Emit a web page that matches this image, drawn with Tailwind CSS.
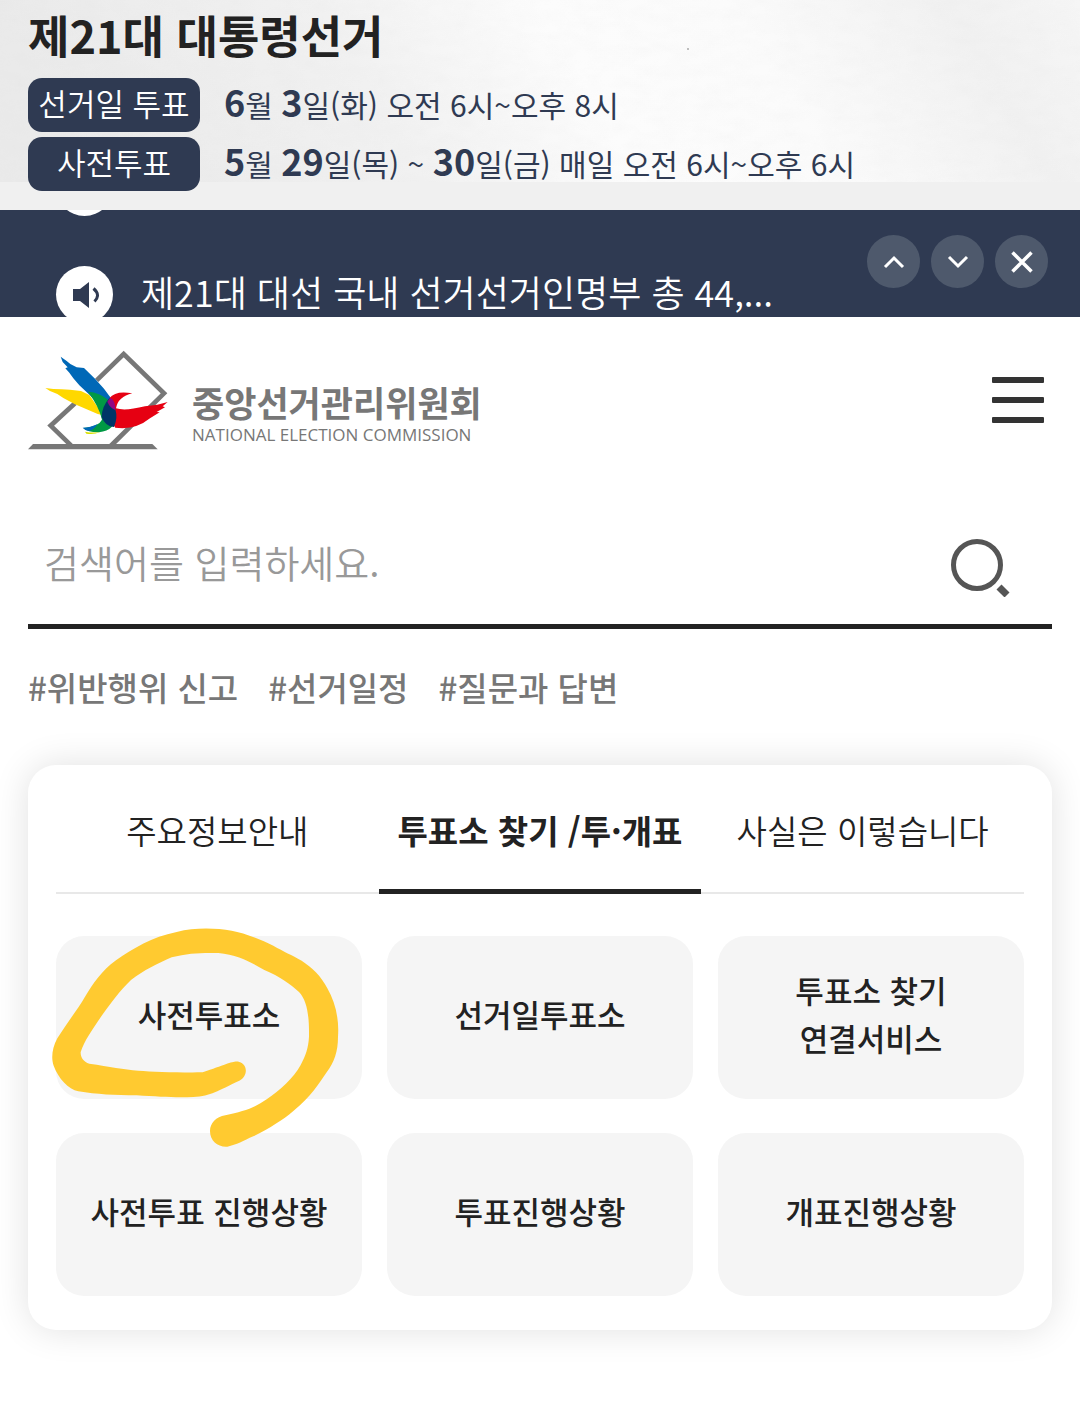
<!DOCTYPE html>
<html lang="ko">
<head>
    <meta charset="UTF-8">
    <meta name="viewport" content="width=device-width, initial-scale=1.0">
    <title>중앙선거관리위원회</title>
    <script src="https://cdn.jsdelivr.net/npm/@tailwindcss/browser@4"></script>
</head>
<body class="bg-white text-[#222] font-['Noto_Sans_CJK_KR',sans-serif]">
    <!-- Election schedule -->
    <section class="relative bg-[#f0f0f0] px-7 pt-1 pb-[19px]">
        <svg class="absolute left-0 top-0 w-full h-[182px]" preserveAspectRatio="none" viewBox="0 0 1080 182" aria-hidden="true">
            <defs>
                <linearGradient id="paper" x1="0" y1="0.1" x2="1" y2="0">
                    <stop offset="0" stop-color="#eaeaea"/>
                    <stop offset="0.3" stop-color="#f1f1f1"/>
                    <stop offset="0.5" stop-color="#fcfcfc"/>
                    <stop offset="0.68" stop-color="#fbfbfb"/>
                    <stop offset="0.88" stop-color="#f1f1f1"/>
                    <stop offset="1" stop-color="#f6f6f6"/>
                </linearGradient>
                <filter id="grain" x="0" y="0" width="100%" height="100%">
                    <feTurbulence type="fractalNoise" baseFrequency="0.04 0.09" numOctaves="4" seed="4"/>
                    <feColorMatrix values="0 0 0 0 0.6  0 0 0 0 0.6  0 0 0 0 0.6  0.5 0 0 0 -0.16"/>
                </filter>
            </defs>
            <rect width="1080" height="182" fill="url(#paper)"/>
            <rect width="1080" height="182" filter="url(#grain)" opacity="0.2"/>
            <circle cx="688" cy="49" r="1" fill="#aaa"/>
        </svg>
        <div class="relative">
            <h1 class="text-[45px] leading-[62px] font-bold mb-3">제21대 대통령선거</h1>
            <dl class="grid grid-cols-[172px_1fr] gap-x-6 gap-y-[5px] text-[#2f3a52]">
                <dt class="h-[54px] leading-[50px] rounded-[14px] bg-[#2f3a52] text-white text-[31px] font-[350] text-center">선거일 투표</dt>
                <dd class="text-[30px] leading-[46px]"><b class="text-[36px] font-bold">6</b>월 <b class="text-[36px] font-bold">3</b>일(화) 오전 6시~오후 8시</dd>
                <dt class="h-[54px] leading-[50px] rounded-[14px] bg-[#2f3a52] text-white text-[31px] font-[350] text-center">사전투표</dt>
                <dd class="text-[30px] leading-[46px]"><b class="text-[36px] font-bold">5</b>월 <b class="text-[36px] font-bold">29</b>일(목) ~ <b class="text-[36px] font-bold">30</b>일(금) 매일 오전 6시~오후 6시</dd>
            </dl>
        </div>
    </section>

    <!-- Rolling notice -->
    <section class="h-[107px] overflow-hidden bg-[#2f3a52] text-white flex justify-between pl-14 pr-8">
        <ul class="-mt-[51px]">
            <li class="h-[107px]" aria-hidden="true">
                <span class="block size-[57px] rounded-full bg-white"></span>
            </li>
            <li class="h-[107px] flex items-start gap-7">
                <span class="size-[57px] rounded-full bg-white shrink-0 flex items-center justify-center">
                    <svg class="w-[28px] h-[28px]" viewBox="-1 0 28 28" aria-hidden="true">
                        <path d="M1 8h7l9-7v26l-9-7H1z" fill="#2f3a52"/>
                        <path d="M21.500 7.500q7.500 6.500 1 13" fill="none" stroke="#2f3a52" stroke-width="3"/>
                    </svg>
                </span>
                <a href="#" class="text-[36px] leading-[50px] font-[350]">제21대 대선 국내 선거선거인명부 총 44,...</a>
            </li>
        </ul>
        <div class="flex gap-[11px] pt-[25px]">
            <button type="button" aria-label="이전" class="size-[53px] rounded-full bg-[#4e596c] flex items-center justify-center">
                <svg class="size-6" viewBox="0 0 24 24" fill="none" stroke="#fff" stroke-width="3"><path d="M3 17l9-9 9 9"/></svg>
            </button>
            <button type="button" aria-label="다음" class="size-[53px] rounded-full bg-[#4e596c] flex items-center justify-center">
                <svg class="size-6" viewBox="0 0 24 24" fill="none" stroke="#fff" stroke-width="3"><path d="M3 7l9 9 9-9"/></svg>
            </button>
            <button type="button" aria-label="닫기" class="size-[53px] rounded-full bg-[#4e596c] flex items-center justify-center">
                <svg class="size-6" viewBox="0 0 24 24" fill="none" stroke="#fff" stroke-width="3.5"><path d="M2.500 2.500l19 19M21.500 2.500l-19 19"/></svg>
            </button>
        </div>
    </section>

    <header class="flex items-center justify-between pl-7 pr-8 pt-[30px]">
        <a href="#" class="flex items-center gap-5">
            <svg class="w-[144px] h-[106px]" viewBox="24 35 432 318" aria-hidden="true">
                <path d="M230 135L311 56L432 174L272 332M165 204L92 271L153 330" fill="none" stroke="#777" stroke-width="14"/>
                <path d="M24 342L39 326H397L413 342z" fill="#777"/>
                <path d="M76 158L100 161L125 162L150 163L183 167L208 179L250 240L233 236L200 222L165 207L130 188L112 176L90 167z" fill="#ffd800"/>
                <path d="M122 64L140 77L151 86L170 96L192 98L225 130L252 160L272 187L260 212L249 222L210 180L178 150L160 129L148 112L136 99L143 96L128 80z" fill="#0068b7"/>
                <path d="M204 169Q240 172 262 192L286 240Q288 285 237 291Q205 292 190 278Q236 274 246 253Q238 215 204 169z" fill="#009944"/>
                <path d="M188 277Q212 277 233 266Q222 283 207 287Q194 285 188 277z" fill="#0068b7"/>
                <path d="M195 289Q220 294 240 290Q222 299 199 295z" fill="#d7e000"/>
                <path d="M337 174Q294 184 288 219Q315 228 375 213L412 208L443 200L428 213L435 216L410 230L419 231L390 249Q346 285 286 277L265 245L268 189Q287 164 337 174z" fill="#e60012"/>
                <path d="M269 187Q245 213 245 246Q256 274 282 275Q294 248 286 222Q276 207 269 187z" fill="#003567"/>
                <path d="M270 187Q286 193 286 224Q270 218 262 199z" fill="#920783"/>
            </svg>
            <span class="block text-[#777] pt-6">
                <span class="block text-[35px] leading-[46px] font-bold">중앙선거관리위원회</span>
                <span class="block text-[17px] leading-5 font-medium font-['Open_Sans',sans-serif]">NATIONAL ELECTION COMMISSION</span>
            </span>
        </a>
        <button type="button" aria-label="전체메뉴" class="w-[60px] h-[60px] flex flex-col items-center justify-center gap-[14px]">
            <span class="w-[52px] h-[6px] rounded-[1px] bg-[#333]"></span>
            <span class="w-[52px] h-[6px] rounded-[1px] bg-[#333]"></span>
            <span class="w-[52px] h-[6px] rounded-[1px] bg-[#333]"></span>
        </button>
    </header>

    <main class="px-7 pt-[53px] pb-[74px]">
        <form class="flex items-center border-b-[5px] border-[#222] h-[123px] pl-4 pr-10">
            <input type="text" id="keyword" aria-label="검색어" placeholder="검색어를 입력하세요." class="flex-1 min-w-0 h-[80px] pb-2 text-[38px] font-[350] placeholder:text-[#999] focus:outline-none">
            <button type="submit" aria-label="검색" class="size-[64px]">
                <svg class="size-[64px]" viewBox="0 -3 64 64" fill="none" stroke="#555">
                    <circle cx="29" cy="29" r="23.500" stroke-width="5"/>
                    <path d="M51 51l8 8" stroke-width="7"/>
                </svg>
            </button>
        </form>

        <nav class="flex gap-[30px] pt-8 text-[33px] leading-[52px] font-medium text-[#777]">
            <a href="#">#위반행위 신고</a>
            <a href="#">#선거일정</a>
            <a href="#">#질문과 답변</a>
        </nav>

        <section class="mt-[52px] rounded-[28px] bg-white px-7 pb-[34px] shadow-[0_0_36px_rgba(0,0,0,0.12)]">
            <div role="tablist" class="grid grid-cols-3 h-[129px] text-[33px] whitespace-nowrap">
                <button type="button" role="tab" class="border-b-2 border-[#e8e8e8] pt-1 font-[350]">주요정보안내</button>
                <button type="button" role="tab" aria-selected="true" class="border-b-[5px] border-[#222] pt-2 font-bold">투표소 찾기 /투·개표</button>
                <button type="button" role="tab" class="border-b-2 border-[#e8e8e8] pt-1 font-[350]">사실은 이렇습니다</button>
            </div>
            <div class="grid grid-cols-3 gap-x-[25px] gap-y-[34px] pt-[42px] text-[31px] leading-[48px] font-medium text-center">
                <div class="relative">
                    <a href="#" class="h-[163px] pb-2 rounded-[28px] bg-[#f5f5f5] flex items-center justify-center">사전투표소</a>
                    <!-- highlighter stroke -->
                    <svg class="absolute -left-[26px] -top-[36px] w-[340px] h-[270px] max-w-none pointer-events-none" viewBox="0 0 1020 810" aria-hidden="true">
                        <path fill="#ffca30" d="M628 486C611 481 594 492 518 517C440 518 370 515 325 512C280 508 240 500 178 491C161 486 151 472 152 456C164 420 185 392 213 350C240 314 269 272 303 240C340 211 385 190 425 172C475 159 515 158 565 159C625 164 668 190 703 210C750 230 780 252 807 276C832 302 838 350 837 410C835 445 827 466 812 495C790 535 750 570 710 598C675 623 640 634 586 646C558 650 540 670 540 693C540 723 564 742 592 740C620 735 640 722 670 709C720 684 757 661 790 633C845 588 865 553 890 517C913 485 924 455 924 410C928 355 915 305 892 265C874 228 846 203 815 182C785 165 762 155 730 137C690 117 640 98 605 92C555 84 495 82 440 96C365 111 310 145 258 181C214 213 190 250 165 290C143 328 110 370 82 415C66 445 63 474 71 497C85 535 115 568 145 574C200 583 255 586 320 586C390 590 440 594 490 591C545 588 562 572 628 542C656 526 652 493 628 486z"/>
                    </svg>
                </div>
                <a href="#" class="h-[163px] pb-2 rounded-[28px] bg-[#f5f5f5] flex items-center justify-center">선거일투표소</a>
                <a href="#" class="h-[163px] pb-2 rounded-[28px] bg-[#f5f5f5] flex items-center justify-center">투표소 찾기<br>연결서비스</a>
                <a href="#" class="h-[163px] pb-2 rounded-[28px] bg-[#f5f5f5] flex items-center justify-center">사전투표 진행상황</a>
                <a href="#" class="h-[163px] pb-2 rounded-[28px] bg-[#f5f5f5] flex items-center justify-center">투표진행상황</a>
                <a href="#" class="h-[163px] pb-2 rounded-[28px] bg-[#f5f5f5] flex items-center justify-center">개표진행상황</a>
            </div>
        </section>
    </main>
</body>
</html>
